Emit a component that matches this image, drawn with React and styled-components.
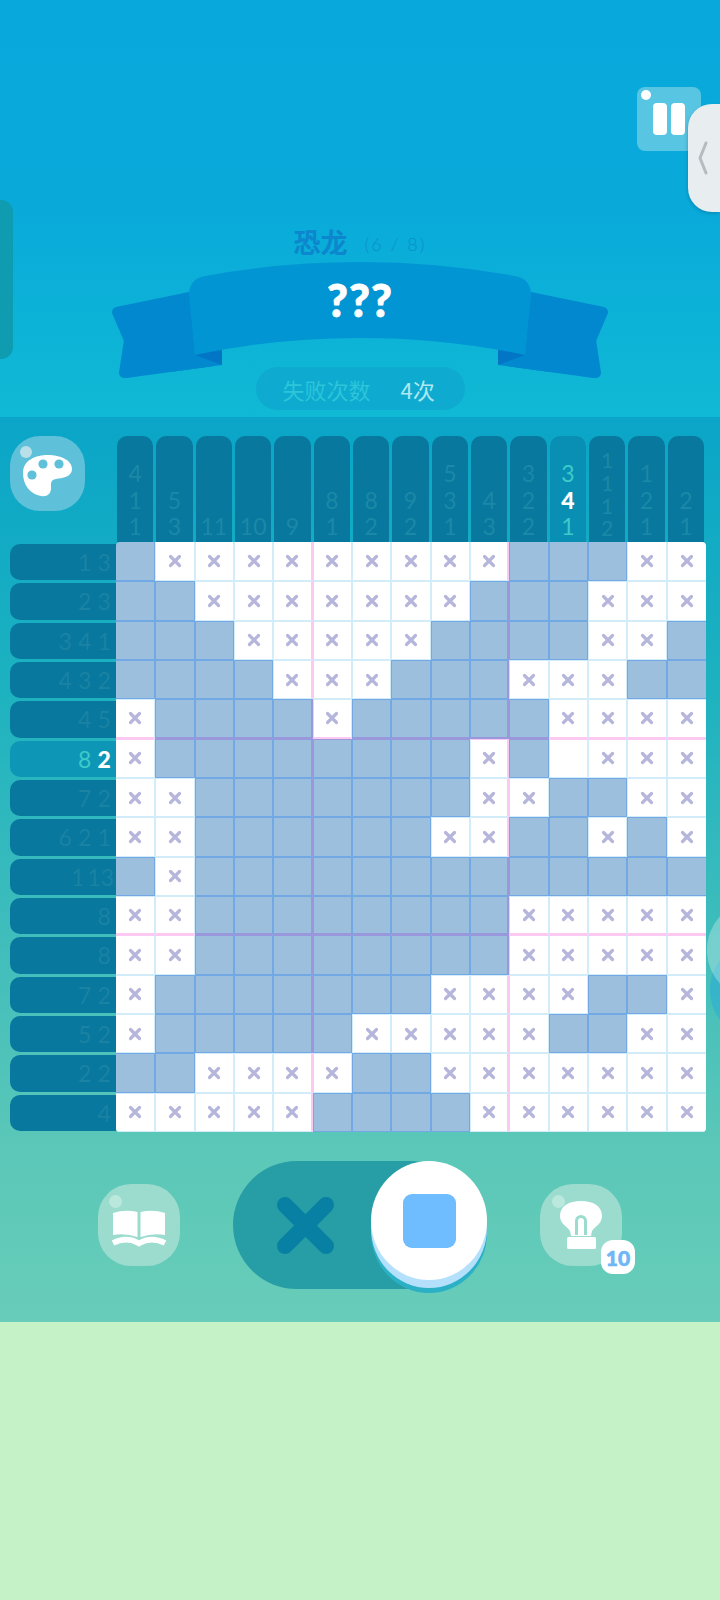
import React from "react";
import styled, { createGlobalStyle } from "styled-components";

const GlobalStyle = createGlobalStyle`
  html, body {
    margin: 0;
    padding: 0;
    background: #c6f2c8;
  }
  * {
    box-sizing: border-box;
  }
`;

const Page = styled.div`
  position: relative;
  width: 720px;
  height: 1600px;
  overflow: hidden;
  display: flex;
  flex-direction: column;
  font-family: "Lato", "Noto Sans CJK SC", sans-serif;
`;

const TopArea = styled.div`
  height: 417px;
  padding-top: 87px;
  display: flex;
  flex-direction: column;
  align-items: center;
  background: linear-gradient(180deg, #08a8dc 0%, #09aada 50%, #10b9d4 100%);
`;

const PauseButton = styled.div`
  position: relative;
  align-self: flex-end;
  margin-right: 19px;
  width: 64px;
  height: 64px;
  border-radius: 8px;
  background: #58c5e2;
  display: flex;
  justify-content: center;
  align-items: center;
  gap: 4px;
`;

const Gloss = styled.span`
  position: absolute;
  left: ${(p) => p.$left}px;
  top: ${(p) => p.$top}px;
  width: ${(p) => p.$size}px;
  height: ${(p) => p.$size}px;
  border-radius: 50%;
  background: ${(p) => p.$color};
`;

const PauseBar = styled.span`
  width: 14px;
  height: 32px;
  border-radius: 4px;
  background: #fff;
`;

const TitleRow = styled.div`
  margin-top: 72px;
  height: 36px;
  display: flex;
  align-items: center;
  gap: 17px;
`;

const TitleName = styled.span`
  font-family: "Noto Sans CJK SC", sans-serif;
  font-size: 27px;
  font-weight: 700;
  color: #0c86cc;
`;

const TitleCount = styled.span`
  font-size: 18px;
  font-weight: 300;
  color: #0a8ecb;
  letter-spacing: 2px;
  padding-top: 6px;
`;

const RibbonStack = styled.div`
  margin-top: 1px;
  width: 500px;
  height: 125px;
  display: grid;
  justify-items: center;
  & > * {
    grid-area: 1 / 1;
  }
`;

const RibbonText = styled.div`
  margin-top: 14px;
  font-size: 45px;
  font-weight: 900;
  line-height: 52px;
  letter-spacing: 1px;
  color: #fff;
  -webkit-text-stroke: 0.8px #fff;
`;

const FailPill = styled.div`
  margin-top: -18px;
  width: 209px;
  height: 43px;
  border-radius: 22px;
  background: #0eaad0;
  display: flex;
  align-items: center;
  padding-left: 27px;
  gap: 30px;
  font-family: "Noto Sans CJK SC", sans-serif;
  font-size: 22px;
`;

const FailLabel = styled.span`
  color: #2cc5da;
`;

const FailValue = styled.span`
  color: #aee8f2;
`;

const LeftTab = styled.div`
  position: absolute;
  left: 0;
  top: 200px;
  width: 13px;
  height: 159px;
  border-radius: 0 12px 12px 0;
  background: #0f9bb0;
`;

const SideHandle = styled.div`
  position: absolute;
  right: 0;
  top: 104px;
  width: 32px;
  height: 108px;
  border-radius: 24px 0 0 24px;
  background: #e8edf0;
  box-shadow: -1px 2px 3px rgba(0, 80, 120, 0.25);
  display: flex;
  align-items: center;
  padding-left: 10px;
`;

const BoardPanel = styled.div`
  position: relative;
  height: 905px;
  overflow: hidden;
  padding-top: 19px;
  background: linear-gradient(
    180deg,
    #0aa5c8 0%,
    #1db2c0 30%,
    #45bfbb 62%,
    #5ac7b8 80%,
    #68cdb9 100%
  );
`;

const Blob = styled.div`
  position: absolute;
  left: ${(p) => p.$left}px;
  top: ${(p) => p.$top}px;
  width: ${(p) => p.$size}px;
  height: ${(p) => p.$size}px;
  border-radius: 50%;
  background: ${(p) => p.$color};
`;

const Board = styled.div`
  position: relative;
  display: grid;
  grid-template-columns: 116px 590px;
  grid-template-rows: 106px 590px;
`;

const PaletteButton = styled.div`
  position: relative;
  margin-left: 10px;
  width: 75px;
  height: 75px;
  border-radius: 30px;
  background: #5fc0d9;
`;

const ColumnClues = styled.div`
  display: grid;
  grid-template-columns: repeat(15, 1fr);
`;

const ColumnClue = styled.div`
  margin: 0 2px 0 1px;
  border-radius: 10px 10px 0 0;
  background: ${(p) => (p.$active ? "#098fb3" : "#08789e")};
  display: flex;
  flex-direction: column;
  justify-content: flex-end;
  align-items: center;
  padding-bottom: 2px;
`;

const ClueDigit = styled.span`
  font-size: ${(p) => (p.$tight ? 21 : 23)}px;
  line-height: ${(p) => (p.$tight ? "22.7px" : "26.7px")};
  font-weight: ${(p) => (p.$current ? 900 : 400)};
  color: ${(p) => (p.$current ? "#fff" : p.$active ? "#3ccaca" : "#1c88a7")};
`;

const RowClues = styled.div`
  display: grid;
  grid-template-rows: repeat(15, 1fr);
`;

const RowClue = styled.div`
  margin: 2px 0 1px 10px;
  border-radius: 10px 0 0 10px;
  background: ${(p) => (p.$active ? "#0e96b6" : "#08789e")};
  display: flex;
  justify-content: flex-end;
  align-items: center;
  padding-right: 2px;
`;

const RowDigit = styled(ClueDigit)`
  min-width: 19.5px;
  line-height: 36px;
  text-align: center;
  color: ${(p) => (p.$current ? "#fff" : p.$active ? "#3ccaca" : "#1a82a3")};
`;

const Grid = styled.div`
  display: grid;
  grid-template-columns: repeat(15, 1fr);
  grid-template-rows: repeat(15, 1fr);
  border-radius: 4px;
  overflow: hidden;
`;

const lineColor = (filled, major) => {
  if (major) return filled ? "#9a98dc" : "#fbc9f1";
  return filled ? "#72a8e4" : "#d2ecfa";
};

const Cell = styled.div`
  display: flex;
  justify-content: center;
  align-items: center;
  background: ${(p) => (p.$filled ? "#9dbfde" : "#fff")};
  border-style: solid;
  border-left-width: ${(p) => (p.$col === 0 ? 0 : 1)}px;
  border-right-width: ${(p) => (p.$col === 14 ? 0 : p.$col % 5 === 4 ? 2 : 1)}px;
  border-top-width: ${(p) => (p.$row === 0 ? 0 : 1)}px;
  border-bottom-width: ${(p) => (p.$row % 5 === 4 && p.$row !== 14 ? 2 : 1)}px;
  border-left-color: ${(p) => lineColor(p.$filled, p.$col % 5 === 0)};
  border-right-color: ${(p) => lineColor(p.$filled, p.$col % 5 === 4)};
  border-top-color: ${(p) => lineColor(p.$filled, p.$row % 5 === 0)};
  border-bottom-color: ${(p) => lineColor(p.$filled, p.$row % 5 === 4 && p.$row !== 14)};
`;

const Toolbar = styled.div`
  height: 190px;
  padding-bottom: 4px;
  display: flex;
  justify-content: center;
  align-items: center;
  gap: 53px;
`;

const ToolButton = styled.div`
  position: relative;
  width: 82px;
  height: 82px;
  border-radius: 33px;
  background: #9bdccf;
  display: flex;
  justify-content: center;
  align-items: center;
  padding-top: ${(p) => p.$drop || 0}px;
`;

const HintBadge = styled.div`
  position: absolute;
  left: 61px;
  top: 56px;
  width: 34px;
  height: 34px;
  border-radius: 12px;
  background: #fff;
  display: flex;
  justify-content: center;
  align-items: center;
  font-size: 21px;
  font-weight: 900;
  letter-spacing: 0;
  color: #6fb6f6;
  -webkit-text-stroke: 0.6px #6fb6f6;
`;

const Toggle = styled.div`
  position: relative;
  width: 254px;
  height: 128px;
`;

const ToggleTrack = styled.div`
  width: 240px;
  height: 128px;
  border-radius: 64px;
  background: #279ea5;
  display: flex;
  align-items: center;
  padding-left: 44px;
`;

const ToggleKnob = styled.div`
  position: absolute;
  right: 0;
  top: 0;
  width: 116px;
  height: 119px;
  border-radius: 50%;
  background: #fff;
  box-shadow: 0 8px 0 #b5e0fb, 0 13px 0 #2bb0c6;
  display: flex;
  justify-content: center;
  align-items: center;
`;

const FillSwatch = styled.div`
  width: 53px;
  height: 54px;
  border-radius: 9px;
  background: #6fbcff;
`;

const BottomArea = styled.div`
  flex: 1;
  background: #c6f2c8;
`;

const columnClues = [
  [4, 1, 1], [5, 3], [11], [10], [9], [8, 1], [8, 2], [9, 2],
  [5, 3, 1], [4, 3], [3, 2, 2], [3, 4, 1], [1, 1, 1, 2], [1, 2, 1], [2, 1],
];

const rowClues = [
  [1, 3], [2, 3], [3, 4, 1], [4, 3, 2], [4, 5], [8, 2], [7, 2], [6, 2, 1],
  [1, 13], [8], [8], [7, 2], [5, 2], [2, 2], [4],
];

// b = filled, x = crossed out, . = still empty
const rows = [
  "bxxxxxxxxxbbbxx",
  "bbxxxxxxxbbbxxx",
  "bbbxxxxxbbbbxxb",
  "bbbbxxxbbbxxxbb",
  "xbbbbxbbbbbxxxx",
  "xbbbbbbbbxb.xxx",
  "xxbbbbbbbxxbbxx",
  "xxbbbbbbxxbbxbx",
  "bxbbbbbbbbbbbbb",
  "xxbbbbbbbbxxxxx",
  "xxbbbbbbbbxxxxx",
  "xbbbbbbbxxxxbbx",
  "xbbbbbxxxxxbbxx",
  "bbxxxxbbxxxxxxx",
  "xxxxxbbbbxxxxxx",
];

const ACTIVE_COL = 11;
const ACTIVE_ROW = 5;

const CrossMark = () => (
  <svg width="14" height="14" viewBox="0 0 14 14">
    <path d="M2.5 2.5 L11.5 11.5 M11.5 2.5 L2.5 11.5" stroke="#b6b6dc" strokeWidth="3.2" strokeLinecap="round" />
  </svg>
);

const RibbonArt = () => (
  <svg width="500" height="125" viewBox="0 0 500 125">
    <g id="tail">
      <path
        d="M7 52 L85 36 L100 101.5 L16 113 L14 113 L19 80 Z"
        fill="#0288cf"
        stroke="#0288cf"
        strokeWidth="10"
        strokeLinejoin="round"
      />
      <path d="M60 40 L112 30 L112 105 L60 112 Z" fill="#0288cf" />
      <path d="M85 95 L112 85 L112 105 Z" fill="#0276c5" />
    </g>
    <use href="#tail" transform="matrix(-1 0 0 1 500 0)" />
    <path
      d="M79 35 Q79 19 95 16 Q170 2 250 2 Q330 2 405 16 Q421 19 421 35 L415 95 Q335 78 250 78 Q165 78 85 95 Z"
      fill="#0295d4"
    />
  </svg>
);

const PaletteIcon = () => (
  <svg width="75" height="75" viewBox="0 0 75 75">
    <path
      d="M13 37 C13 24 26 19 38 19 C50 19 62 24 62 33 C62 41 52 42 46 43 C40 44 41 48 41 52 C41 58 37 61 31 60 C20 58 13 49 13 37 Z"
      fill="#fff"
    />
    <circle cx="33" cy="28" r="4.6" fill="#5fc0d9" />
    <circle cx="49" cy="28" r="4.6" fill="#5fc0d9" />
    <circle cx="22" cy="39" r="4.6" fill="#5fc0d9" />
  </svg>
);

const BookIcon = () => (
  <svg width="56" height="40" viewBox="0 0 56 40">
    <path d="M2 4 Q14 0 26.5 3 L26.5 28 Q14 24 2 26 Z" fill="#fff" />
    <path d="M54 4 Q42 0 29.5 3 L29.5 28 Q42 24 54 26 Z" fill="#fff" />
    <path d="M2 34 Q16 27 28 34.5 Q40 27 54 34" fill="none" stroke="#fff" strokeWidth="5.5" />
  </svg>
);

const BulbIcon = () => (
  <svg width="44" height="50" viewBox="0 0 44 50">
    <path
      d="M1 16 C1 6 10 1 22 1 C34 1 43 6 43 16 C43 24 36 26 33 31 L32 36 L12 36 L11 31 C8 26 1 24 1 16 Z"
      fill="#fff"
    />
    <path d="M17.5 35 L17.5 21 C17.5 15 26.5 15 26.5 21 L26.5 35" fill="none" stroke="#9bdccf" strokeWidth="3" />
    <rect x="8" y="37" width="29" height="12" rx="1.5" fill="#fff" />
  </svg>
);

const ChevronIcon = () => (
  <svg width="10" height="34" viewBox="0 0 10 34">
    <path d="M8 2 L2 17 L8 32" fill="none" stroke="#b5bcc0" strokeWidth="3" strokeLinecap="round" strokeLinejoin="round" />
  </svg>
);

const BigCross = () => (
  <svg width="57" height="57" viewBox="0 0 57 57">
    <path d="M8 8 L49 49 M49 8 L8 49" stroke="#0880a3" strokeWidth="16" strokeLinecap="round" />
  </svg>
);

const App = () => {
  return (
    <Page>
      <GlobalStyle />
      <TopArea>
        <PauseButton>
          <Gloss $left={4} $top={3} $size={10} $color="#fff" />
          <PauseBar />
          <PauseBar />
        </PauseButton>
        <TitleRow>
          <TitleName>恐龙</TitleName>
          <TitleCount>(6 / 8)</TitleCount>
        </TitleRow>
        <RibbonStack>
          <RibbonArt />
          <RibbonText>???</RibbonText>
        </RibbonStack>
        <FailPill>
          <FailLabel>失败次数</FailLabel>
          <FailValue>4次</FailValue>
        </FailPill>
      </TopArea>

      <BoardPanel>
        <Blob $left={710} $top={523} $size={100} $color="rgba(30, 165, 225, 0.4)" />
        <Blob $left={707} $top={483} $size={100} $color="rgba(255, 255, 255, 0.28)" />
        <Board>
          <PaletteButton>
            <Gloss $left={10} $top={10} $size={12} $color="#b9dfe9" />
            <PaletteIcon />
          </PaletteButton>
          <ColumnClues>
            {columnClues.map((clue, c) => (
              <ColumnClue key={c} $active={c === ACTIVE_COL}>
                {clue.map((n, i) => (
                  <ClueDigit
                    key={i}
                    $tight={clue.length > 3}
                    $active={c === ACTIVE_COL}
                    $current={c === ACTIVE_COL && i === 1}
                  >
                    {n}
                  </ClueDigit>
                ))}
              </ColumnClue>
            ))}
          </ColumnClues>
          <RowClues>
            {rowClues.map((clue, r) => (
              <RowClue key={r} $active={r === ACTIVE_ROW}>
                {clue.map((n, i) => (
                  <RowDigit
                    key={i}
                    $active={r === ACTIVE_ROW}
                    $current={r === ACTIVE_ROW && i === 1}
                  >
                    {n}
                  </RowDigit>
                ))}
              </RowClue>
            ))}
          </RowClues>
          <Grid>
            {rows.map((line, r) =>
              line.split("").map((mark, c) => (
                <Cell key={`${r}-${c}`} $row={r} $col={c} $filled={mark === "b"}>
                  {mark === "x" && <CrossMark />}
                </Cell>
              ))
            )}
          </Grid>
        </Board>

        <Toolbar>
          <ToolButton $drop={8}>
            <Gloss $left={11} $top={11} $size={13} $color="#bbe8dd" />
            <BookIcon />
          </ToolButton>
          <Toggle>
            <ToggleTrack>
              <BigCross />
            </ToggleTrack>
            <ToggleKnob>
              <FillSwatch />
            </ToggleKnob>
          </Toggle>
          <ToolButton>
            <Gloss $left={12} $top={11} $size={13} $color="#bbe8dd" />
            <BulbIcon />
            <HintBadge>10</HintBadge>
          </ToolButton>
        </Toolbar>
      </BoardPanel>

      <BottomArea />

      <LeftTab />
      <SideHandle>
        <ChevronIcon />
      </SideHandle>
    </Page>
  );
};

export default App;
